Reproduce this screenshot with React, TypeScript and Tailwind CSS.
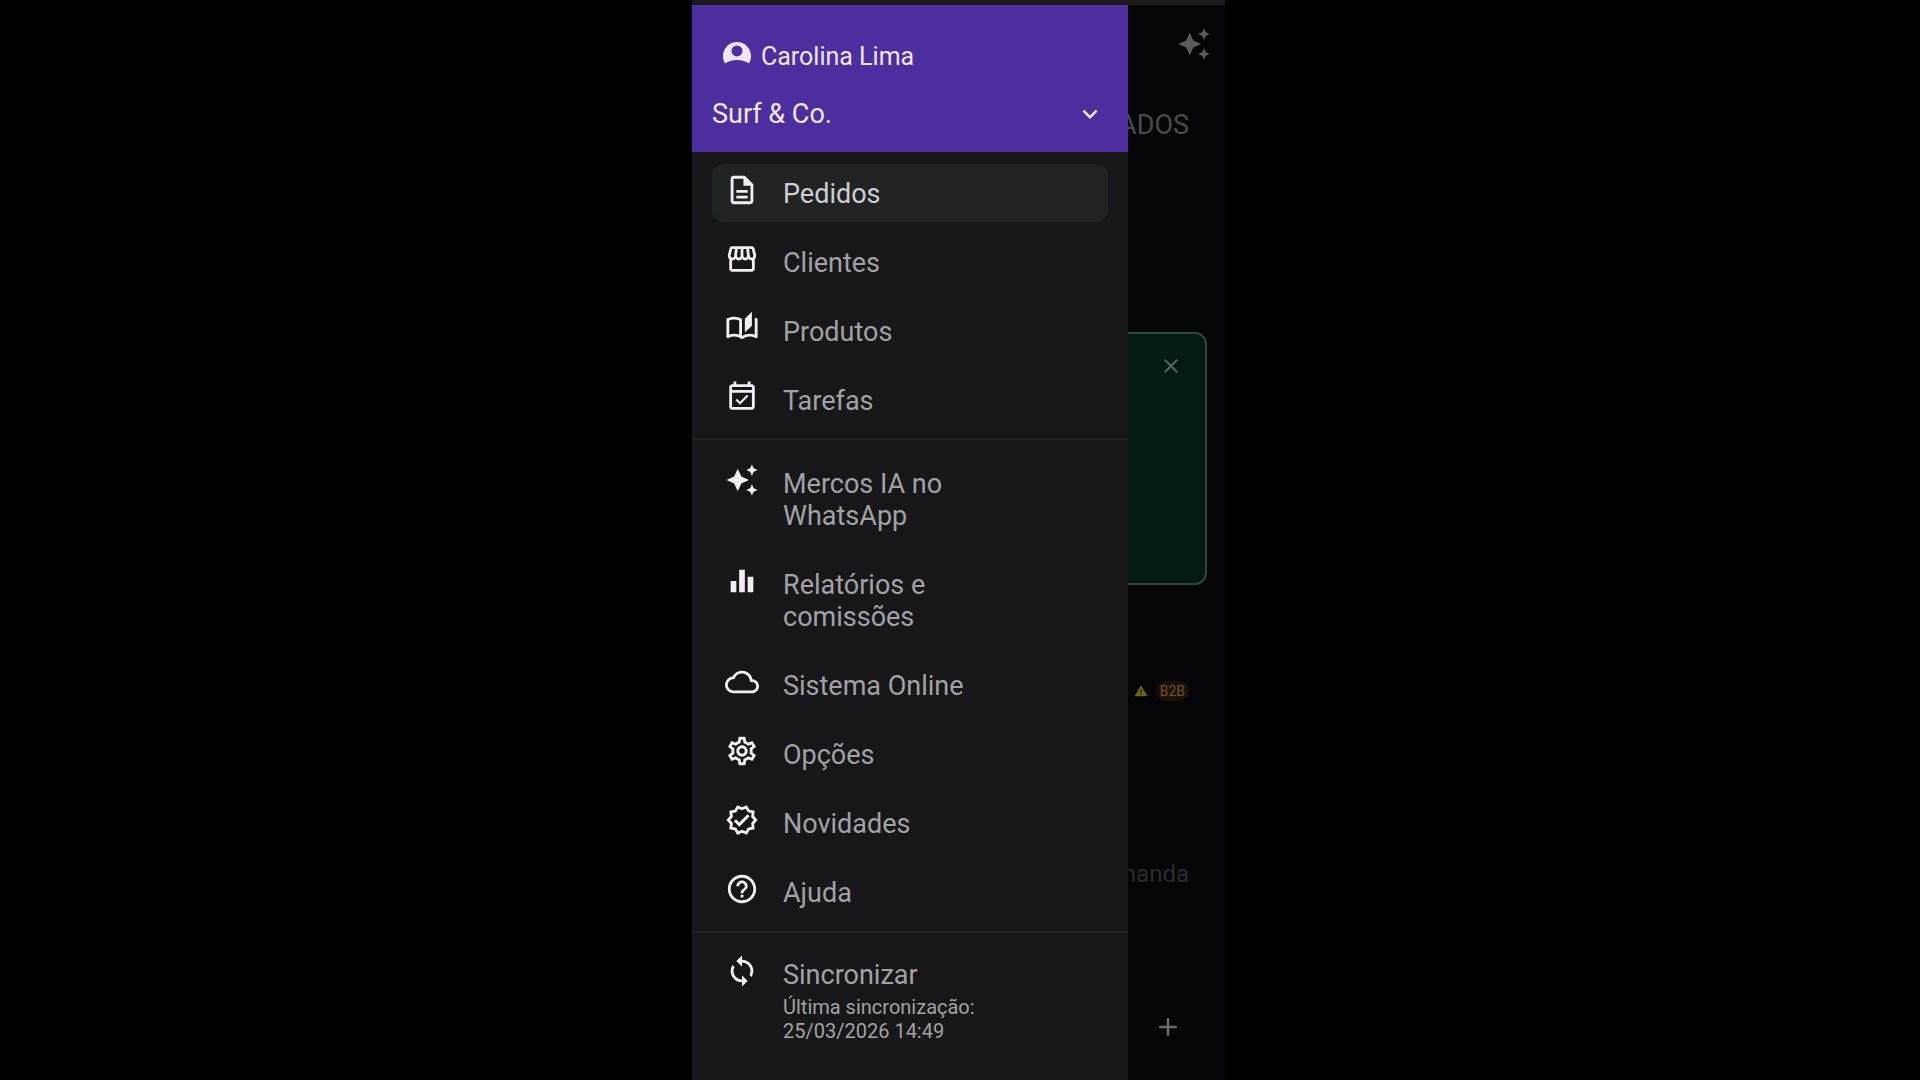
import React from 'react';
import type { IconType } from 'react-icons';
import {
  MdAdd,
  MdAutoAwesome,
  MdClose,
  MdEqualizer,
  MdHelpOutline,
  MdKeyboardArrowDown,
  MdOutlineAutoStories,
  MdOutlineCloud,
  MdOutlineDescription,
  MdOutlineEventAvailable,
  MdOutlineSettings,
  MdOutlineStorefront,
  MdOutlineVerified,
  MdSync,
  MdWarning,
} from 'react-icons/md';

interface MenuItem {
  label: string;
  icon: IconType;
  active?: boolean;
  details?: string[];
}

const mainItems: MenuItem[] = [
  { label: 'Pedidos', icon: MdOutlineDescription, active: true },
  { label: 'Clientes', icon: MdOutlineStorefront },
  { label: 'Produtos', icon: MdOutlineAutoStories },
  { label: 'Tarefas', icon: MdOutlineEventAvailable },
];

const toolItems: MenuItem[] = [
  { label: 'Mercos IA no WhatsApp', icon: MdAutoAwesome },
  { label: 'Relatórios e comissões', icon: MdEqualizer },
  { label: 'Sistema Online', icon: MdOutlineCloud },
  { label: 'Opções', icon: MdOutlineSettings },
  { label: 'Novidades', icon: MdOutlineVerified },
  { label: 'Ajuda', icon: MdHelpOutline },
];

const syncItems: MenuItem[] = [
  { label: 'Sincronizar', icon: MdSync, details: ['Última sincronização:', '25/03/2026 14:49'] },
];

const UserIcon: React.FC = () => (
  <svg viewBox="0 0 28 24" className="h-6 w-7" aria-hidden="true">
    <path
      fill="currentColor"
      fillRule="evenodd"
      d="M14 1C6.300 1 0 7.200 0 15c0 2.800.700 5.300 2 7.500C5 20.300 9.500 19 14 19s9 1.300 12 3.500c1.300-2.200 2-4.700 2-7.500C28 7.200 21.700 1 14 1Zm0 3.400a5.500 5.500 0 1 1 0 11 5.500 5.500 0 0 1 0-11Z"
    />
  </svg>
);

const MenuList: React.FC<{ items: MenuItem[] }> = ({ items }) => (
  <ul className="flex flex-col gap-[11px] px-5">
    {items.map(({ label, icon: Icon, active, details }) => (
      <li key={label}>
        <a
          href="#"
          className={`flex items-start gap-6 rounded-xl px-[13px] py-[9px] ${active ? 'bg-[#212322] text-[#d0cdd2]' : 'text-[#a3a1a5]'}`}
        >
          <Icon className="size-[34px] shrink-0 text-[#f0eef2]" />
          <span className="w-[200px] pt-[5px] pb-[3px] text-[27px] leading-8">
            {label}
            {details && (
              <span className="mt-1 block text-xl leading-6">
                {details.map((line) => (
                  <span key={line} className="block">{line}</span>
                ))}
              </span>
            )}
          </span>
        </a>
      </li>
    ))}
  </ul>
);

// Orders screen dimmed behind the open drawer
const OrdersBackdrop: React.FC = () => (
  <main className="flex min-w-0 flex-1 flex-col overflow-hidden bg-[#050507]">
    <div className="flex justify-end pt-[22px] pr-[14px]">
      <button type="button" aria-label="IA" className="text-[#5c5c5c]">
        <MdAutoAwesome className="size-[34px]" />
      </button>
    </div>
    <div className="mt-12 flex justify-end pr-9 text-[27px] leading-8 text-[#4a4a4a]">FATURADOS</div>
    <section className="mt-[191px] mr-[18px] h-[253px] rounded-r-xl border-2 border-l-0 border-[#2c4a3b] bg-[#041c10]">
      <div className="flex justify-end pt-5 pr-[22px]">
        <button type="button" aria-label="Fechar" className="text-[#53645b]">
          <MdClose className="size-6" />
        </button>
      </div>
    </section>
    <div className="mt-24 flex items-center justify-end gap-2 pr-9">
      <MdWarning className="size-[14px] text-[#6d6412]" />
      <span className="rounded-full bg-[#1d1003] px-1 text-sm leading-5 text-[#68532a]">B2B</span>
    </div>
    <div className="mt-[157px] flex justify-end pr-9 text-2xl leading-8 text-[#2b2b2d]">demanda</div>
    <div className="mt-[122px] flex justify-end pr-[42px]">
      <button type="button" aria-label="Adicionar" className="text-[#6a6a6a]">
        <MdAdd className="size-[30px]" />
      </button>
    </div>
  </main>
);

export default function App() {
  return (
    <div className="flex min-h-screen justify-center bg-black pr-[3px] font-['Roboto',sans-serif]">
      <div className="flex w-full max-w-[533px] flex-col">
        <div className="h-[5px] bg-[#1b1b1b]" />
        <div className="flex flex-1">
          <aside className="w-[436px] shrink-0 bg-[#171719]">
            <header className="h-[147px] bg-[#4c2e9f] px-5 text-[#f0e6fb]">
              <div className="flex items-start gap-[10px] pt-9 pl-[11px] text-[25px] leading-8">
                <UserIcon />
                Carolina Lima
              </div>
              <button type="button" className="mt-[25px] flex w-full items-center justify-between pr-[3px] text-[27px] leading-8">
                Surf &amp; Co.
                <MdKeyboardArrowDown className="size-[30px]" />
              </button>
            </header>
            <nav>
              <div className="pt-3 pb-[9px]">
                <MenuList items={mainItems} />
              </div>
              <div className="border-t-2 border-[#212122] pt-[14px] pb-[10px]">
                <MenuList items={toolItems} />
              </div>
              <div className="border-t-2 border-[#252528] pt-3">
                <MenuList items={syncItems} />
              </div>
            </nav>
          </aside>
          <OrdersBackdrop />
        </div>
      </div>
    </div>
  );
}
